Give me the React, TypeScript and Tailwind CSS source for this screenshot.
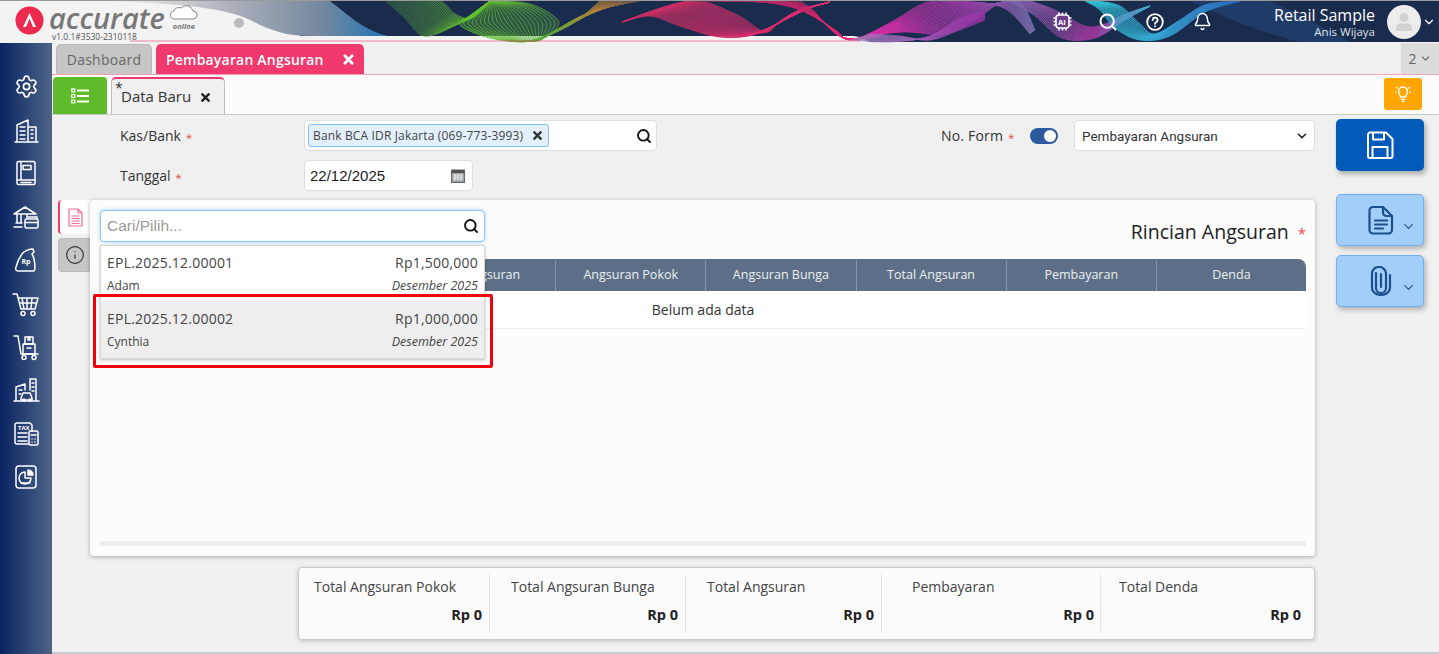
import React from "react";
import { Settings, Search, Bell, ChevronDown, Info } from "lucide-react";
import { FaTimes, FaUser } from "react-icons/fa";

type P = [number, number];
const smooth = (pts: P[], move = true) => {
  let d = `${move ? "M" : "L"}${pts[0][0]},${pts[0][1]}`;
  for (let i = 0; i < pts.length - 1; i++) {
    const p0 = pts[Math.max(i - 1, 0)], p1 = pts[i], p2 = pts[i + 1], p3 = pts[Math.min(i + 2, pts.length - 1)];
    d += ` C${(p1[0] + (p2[0] - p0[0]) / 6).toFixed(1)},${(p1[1] + (p2[1] - p0[1]) / 6).toFixed(1)} ${(p2[0] - (p3[0] - p1[0]) / 6).toFixed(1)},${(p2[1] - (p3[1] - p1[1]) / 6).toFixed(1)} ${p2[0]},${p2[1]}`;
  }
  return d;
};

const ribbons: { id: string; a: P[]; b: P[]; n: number; o: number }[] = [
  { id: "g1", a: [[385, 0], [405, 18], [424, 36], [455, 25], [490, 1]], b: [[440, 0], [447, 6], [455, 14], [472, 18], [490, 1]], n: 22, o: 0.75 },
  { id: "g2", a: [[490, 1], [472, 15], [460, 25], [490, 38], [530, 41], [570, 25], [600, 1]], b: [[490, 1], [530, 4], [558, 20], [552, 33], [540, 40], [590, 12], [640, 1]], n: 24, o: 0.75 },
  { id: "p1", a: [[622, 22], [650, 16], [680, 26], [720, 37], [760, 33], [795, 12], [830, 2]], b: [[622, 22], [690, 1], [735, 14], [765, 32], [780, 22], [810, 8], [830, 2]], n: 26, o: 0.8 },
  { id: "p2", a: [[690, 1], [760, 2], [800, 10], [835, 30], [850, 40], [880, 30], [900, 22]], b: [[800, 1], [805, 4], [815, 12], [825, 24], [845, 38], [880, 36], [900, 22]], n: 18, o: 0.7 },
  { id: "m1", a: [[865, 36], [895, 20], [925, 3], [955, 1], [990, 4], [1010, 12], [1030, 34]], b: [[865, 36], [905, 32], [945, 34], [975, 20], [1000, 3], [1020, 1], [1035, 30]], n: 26, o: 0.8 },
  { id: "m2", a: [[870, 34], [900, 36], [930, 40], [960, 30], [985, 20]], b: [[850, 40], [890, 42], [930, 36], [960, 18], [985, 12]], n: 14, o: 0.6 },
  { id: "t2", a: [[1010, 1], [1035, 16], [1062, 38], [1095, 38], [1125, 20], [1150, 6]], b: [[1030, 1], [1055, 10], [1085, 26], [1105, 24], [1125, 14], [1150, 6]], n: 16, o: 0.75 },
  { id: "t1", a: [[1085, 1], [1100, 10], [1115, 28], [1140, 40], [1170, 36], [1205, 12], [1240, 1]], b: [[1095, 1], [1120, 6], [1140, 24], [1155, 34], [1180, 20], [1205, 5], [1240, 1]], n: 18, o: 0.8 },
];

function Banner() {
  return (
    <svg className="absolute inset-0 h-[43px] w-[1439px]" viewBox="0 0 1439 43" preserveAspectRatio="none">
      <defs>
        <linearGradient id="gb" gradientUnits="userSpaceOnUse" x1="110" x2="390" y1="0" y2="0"><stop offset="0" stopColor="#f3f3f3" /><stop offset="0.45" stopColor="#a9aeb8" /><stop offset="0.75" stopColor="#76889f" /><stop offset="1" stopColor="#1d74b4" /></linearGradient>
        <linearGradient id="g1" gradientUnits="userSpaceOnUse" x1="385" x2="490" y1="0" y2="0"><stop offset="0" stopColor="#38693f" /><stop offset="1" stopColor="#66c92a" /></linearGradient>
        <linearGradient id="g2" gradientUnits="userSpaceOnUse" x1="460" x2="640" y1="0" y2="0"><stop offset="0" stopColor="#66c92a" /><stop offset="0.5" stopColor="#56a63a" /><stop offset="0.75" stopColor="#b98438" /><stop offset="1" stopColor="#5a4a50" /></linearGradient>
        <linearGradient id="p1" gradientUnits="userSpaceOnUse" x1="622" x2="830" y1="0" y2="0"><stop offset="0" stopColor="#c42f60" /><stop offset="1" stopColor="#e2296f" /></linearGradient>
        <linearGradient id="p2" gradientUnits="userSpaceOnUse" x1="690" x2="900" y1="0" y2="0"><stop offset="0" stopColor="#7a2a55" /><stop offset="0.7" stopColor="#e1246f" /><stop offset="1" stopColor="#e0289a" /></linearGradient>
        <linearGradient id="m1" gradientUnits="userSpaceOnUse" x1="865" x2="1035" y1="0" y2="0"><stop offset="0" stopColor="#d42aa0" /><stop offset="0.6" stopColor="#9b3aa8" /><stop offset="1" stopColor="#6d6aa5" /></linearGradient>
        <linearGradient id="m2" gradientUnits="userSpaceOnUse" x1="850" x2="985" y1="0" y2="0"><stop offset="0" stopColor="#9888c0" /><stop offset="1" stopColor="#a52eac" /></linearGradient>
        <linearGradient id="t1" gradientUnits="userSpaceOnUse" x1="1085" x2="1240" y1="0" y2="0"><stop offset="0" stopColor="#2ec4d0" /><stop offset="0.5" stopColor="#35a8d8" /><stop offset="1" stopColor="#2a62b0" /></linearGradient>
        <linearGradient id="t2" gradientUnits="userSpaceOnUse" x1="1010" x2="1150" y1="0" y2="0"><stop offset="0" stopColor="#7a6ab0" /><stop offset="0.6" stopColor="#b335a5" /><stop offset="1" stopColor="#36b8cc" /></linearGradient>
      </defs>
      <rect x="0" y="0" width="1439" height="43" fill="#f3f3f3" />
      <path d="M300,1 L1439,1 L1439,42 L870,42 C862,38 860,36 850,36 L300,36 Z" fill="#1a2c4e" />
      <path d="M1190,1 C1230,20 1260,32 1300,42 L1350,42 C1320,25 1290,10 1270,1 Z" fill="#2a5a9a" opacity="0.35" />
      <path d="M100,1 C180,3 225,8 250,20 C270,30 285,36 310,36 L388,36 C362,30 345,12 330,1 Z" fill="url(#gb)" />
      {ribbons.map((r) => (
        <path key={r.id} d={smooth(r.a) + " " + smooth([...r.b].reverse(), false) + " Z"} fill={`url(#${r.id})`} opacity="0.3" />
      ))}
      {ribbons.map((r) =>
        Array.from({ length: r.n }, (_, i) => {
          const t = i / (r.n - 1);
          const pts = r.a.map((p, k) => [p[0] + (r.b[k][0] - p[0]) * t, +(p[1] + (r.b[k][1] - p[1]) * t).toFixed(1)] as P);
          return <path key={r.id + i} d={smooth(pts)} fill="none" stroke={`url(#${r.id})`} strokeWidth="1" opacity={r.o} />;
        })
      )}
      <rect x="0" y="0" width="1439" height="1" fill="#9a9a9a" />
      <rect x="130" y="40.5" width="730" height="1" fill="#f0386b" opacity="0.6" />
    </svg>
  );
}

function SI({ children }: { children: React.ReactNode }) {
  return (
    <div className="flex h-[43.4px] items-center justify-center">
      <svg width="28" height="28" viewBox="0 0 28 28" fill="none" stroke="#fff" strokeWidth="1.5" strokeLinejoin="round" strokeLinecap="round">
        {children}
      </svg>
    </div>
  );
}

function Sidebar() {
  return (
    <div className="flex w-[52px] shrink-0 flex-col bg-gradient-to-r from-[#092361] to-[#4f6488] pt-[22px]">
      <div className="flex h-[43.4px] items-center justify-center"><Settings size={25} color="#fff" strokeWidth={1.6} /></div>
      <SI><path d="M3 26h23M5 26V9l11-5v22M16 11h8v15M8 11h5M8 15h5M8 19h5M8 23h5M19 14h2M19 18h2M19 22h2" /></SI>
      <SI><rect x="5" y="2.5" width="18" height="23" rx="1.5" /><path d="M9 3v18M5 21h18M11 6.5h8v4h-8zM9 23.500h10" /></SI>
      <SI><path d="M2 11l11-7 11 7zM5 11v9M9 11v9M15 11v4M2 24h8M4 20h6" /><rect x="13" y="16" width="13" height="9" rx="1.5" /><path d="M13 19.500h13M16 14h9v2" /></SI>
      <SI><path d="M10 8c2-3 7-5 11-5l1 3-2 2c2 3 3 9 3 15l-1 2H6c-2 0-3-2-2-4 1-4 3-9 6-13z" /><text x="9.500" y="18" fontSize="7" fontWeight="700" fill="#fff" stroke="none" fontFamily="'Open Sans'">Rp</text></SI>
      <SI><path d="M1 4h4l4 15h14l3-11H6M10 8l2 11M15 8v11M20 8l-1 11M7.500 13h17" /><circle cx="11" cy="23.500" r="2" /><circle cx="21" cy="23.500" r="2" /></SI>
      <SI><path d="M2 3h4l3 18M9 21h17" /><rect x="11" y="11" width="12" height="10" /><rect x="13" y="4" width="8" height="7" /><path d="M16 4v3h2V4M15 15h4" /><circle cx="12" cy="24.500" r="2" /><circle cx="22" cy="24.500" r="2" /></SI>
      <SI><path d="M2 25h25M4 24V11l9-3v6M18 14V3h6v21M7 14h3M7 18h2M20 7h2M20 11h2M20 15h2" /><path d="M9 22l2-5h7l2 5v2H9z" /><circle cx="12" cy="24" r="1" /><circle cx="18" cy="24" r="1" /></SI>
      <SI><path d="M17 24H5c-1 0-2-1-2-2V5c0-1 1-2 2-2h13l2 2v6M6 13h9M6 17h9M6 21h9" /><rect x="17" y="11" width="9" height="14" rx="1.500" /><path d="M19 15h5M20 19h0M23 19h0M20 22h0M23 22h0" /><text x="6" y="10" fontSize="6" fontWeight="700" fill="#fff" stroke="none" fontFamily="'Open Sans'">TAX</text></SI>
      <SI><rect x="4" y="3" width="20" height="22" rx="3" /><path d="M13 9a6 6 0 1 0 6 6h-6z" /><path d="M16 7a5 5 0 0 1 5 5h-5z" fill="#fff" /><path d="M9 20h9" /></SI>
    </div>
  );
}

function Header() {
  return (
    <div className="relative h-[43px] w-full shrink-0 overflow-hidden">
      <Banner />
      <div className="relative flex h-full items-center justify-between">
        <div className="relative flex h-full items-start pl-[15px]">
          <svg className="mt-[6px]" width="29" height="29" viewBox="0 0 29 29">
            <circle cx="14.500" cy="14.500" r="14" fill="#ec2a50" />
            <path d="M14.500 7 L21 21 H18 L14.500 12.500 L11 21 H8 Z" fill="#fff" />
          </svg>
          <div className="ml-[5px] flex flex-col">
            <div className="flex items-start">
              <span className="mt-[-2px] text-[29px] font-semibold italic leading-[40px] text-[#777]">accurate</span>
              <div className="ml-[5px] flex flex-col items-center">
                <svg className="mt-[4px]" width="28" height="16" viewBox="0 0 28 16" fill="#fff" stroke="#8a8a8a" strokeWidth="1">
                  <path d="M5 15a4 4 0 0 1-1-8 5 5 0 0 1 7-3 7 7 0 0 1 12 3 4 4 0 0 1 0 8z" />
                </svg>
                <span className="mt-[1px] text-[7.500px] font-bold italic leading-[10px] text-[#777]">online</span>
              </div>
            </div>
            <span className="absolute left-[52px] top-[31px] text-[8.500px] leading-[11px] text-[#555]">v1.0.1#3530-2310118</span>
          </div>
          <div className="absolute left-[234px] top-[18px] h-[10px] w-[10px] rounded-full bg-[#bbb]" />
        </div>
        <div className="flex items-center">
          <svg className="mr-[26px]" width="19" height="19" viewBox="0 0 19 19" fill="none" stroke="#fff" strokeWidth="1.600">
            <rect x="3" y="3" width="13" height="13" rx="3" />
            <path d="M6 .5v2.500M9.500 .5v2.500M13 .5v2.500M6 16v2.500M9.500 16v2.500M13 16v2.500M.5 6H3M.5 9.500H3M.5 13H3M16 6h2.500M16 9.500h2.500M16 13h2.500" />
            <text x="5" y="12.500" fontSize="7.500" fontWeight="700" fill="#fff" stroke="none" fontFamily="'Open Sans'">AI</text>
          </svg>
          <Search className="mr-[28px]" size={20} color="#fff" strokeWidth={2.400} />
          <svg className="mr-[29px]" width="18" height="18" viewBox="0 0 18 18" fill="none" stroke="#fff" strokeWidth="1.800" strokeLinecap="round">
            <circle cx="9" cy="9" r="7.800" />
            <path d="M6.700 7a2.400 2.400 0 1 1 3.400 2.200c-.8.4-1.100.8-1.100 1.600M9 13.200v.1" />
          </svg>
          <Bell className="mr-[62px]" size={19} color="#fff" strokeWidth={1.900} />
          <div className="flex flex-col items-end">
            <span className="text-[16px] leading-[20px] text-white">Retail Sample</span>
            <span className="text-[11.500px] leading-[14px] text-[#dfe3ea]">Anis Wijaya</span>
          </div>
          <div className="ml-[12px] flex h-[34px] w-[34px] items-center justify-center overflow-hidden rounded-full bg-[#ececec]">
            <FaUser size={18} color="#d2d2d2" />
          </div>
          <ChevronDown className="ml-[1px] mr-[3px]" size={14} color="#fff" strokeWidth={2} />
        </div>
      </div>
    </div>
  );
}

function Tabs() {
  return (
    <div className="flex h-[32px] shrink-0 items-end justify-between border-b border-[#f2a0b8] bg-[#f0f0f0]">
      <div className="flex items-end">
        <div className="ml-[4px] flex h-[30px] w-[96px] items-center justify-center rounded-t-[5px] border border-b-0 border-[#bbb] bg-[#c6c6c6] text-[14px] tracking-[0.25px] text-[#666]">Dashboard</div>
        <div className="ml-[4px] flex h-[30px] w-[208px] items-center justify-between rounded-t-[5px] bg-[#f0396c] pl-[10px] pr-[8px] text-[14px] font-semibold tracking-[0.2px] text-white">
          <span>Pembayaran Angsuran</span>
          <FaTimes size={15} color="#fff" />
        </div>
      </div>
      <div className="flex h-[31px] w-[38px] items-center justify-center gap-[2px] bg-[#dcdcdc] text-[14px] text-[#666]">
        2 <ChevronDown size={13} color="#666" />
      </div>
    </div>
  );
}

function SubTabs() {
  return (
    <div className="flex h-[40px] shrink-0 items-end justify-between border-b border-[#c8c8c8] bg-[#fcfcfc]">
      <div className="flex items-end">
        <div className="ml-[1px] flex h-[37px] w-[54px] items-center justify-center rounded-t-[4px] bg-[#5fbb2a]">
          <svg width="18" height="16" viewBox="0 0 18 16" fill="none" stroke="#fff" strokeWidth="2">
            <path d="M6 2.500h12M6 8h12M6 13.500h12" />
            <path strokeWidth="1.200" d="M.8 .8h3v3h-3zM.8 6.500h3v3h-3zM.8 12h3v3h-3z" />
          </svg>
        </div>
        <div className="relative ml-[4px] flex h-[37px] w-[114px] items-center rounded-t-[5px] border border-b-0 border-[#bbb] border-t-2 border-t-[#f0396c] bg-[#f0f0f0] pl-[9px] text-[15px] text-[#333]">
          <span className="absolute left-[3px] top-[1px] text-[14px] leading-[16px]">*</span>
          <span>Data Baru</span>
          <FaTimes className="ml-[8px] mt-[2px]" size={13} color="#222" />
        </div>
      </div>
      <div className="mb-[4px] mr-[17px] flex h-[32px] w-[38px] items-center justify-center rounded-[3px] bg-[#ffa600]">
        <svg width="16" height="18" viewBox="0 0 16 18" fill="none" stroke="#fff" strokeWidth="1.400" strokeLinecap="round">
          <path d="M5.500 12c0-2-2-3-2-5.500a4.500 4.500 0 0 1 9 0c0 2.500-2 3.500-2 5.500z" />
          <path d="M6.500 14.500h3M7.500 16.500h1M1.500 2.500l.5.500M14.500 2.500l-.5.500M.5 7h.5M15 7h.5" />
        </svg>
      </div>
    </div>
  );
}

function Req() {
  return <span className="ml-[5px] align-[-1px] text-[11px] text-[#ef4444]">*</span>;
}

function FormRows() {
  return (
    <div className="flex shrink-0 flex-col gap-[9px] pl-[68px] pt-[5px]">
      <div className="flex h-[31px] items-center justify-between">
        <div className="flex items-center">
          <div className="w-[184px] text-[14px] text-[#333]">Kas/Bank<Req /></div>
          <div className="flex h-[31px] w-[353px] items-center justify-between rounded-[4px] border border-[#ddd] bg-white pl-[3px] pr-[4px]">
            <div className="flex h-[23px] w-[241px] items-center justify-between rounded-[3px] border border-[#7fbdf5] bg-[#e3effb] pl-[4px] pr-[4px] text-[12px] tracking-[0.15px] text-[#444]">
              <span>Bank BCA IDR Jakarta (069-773-3993)</span>
              <FaTimes size={13} color="#333" />
            </div>
            <Search size={16} color="#111" strokeWidth={2.800} />
          </div>
        </div>
        <div className="flex items-center">
          <span className="w-[89px] text-[14px] tracking-[0.2px] text-[#333]">No. Form<Req /></span>
          <div className="flex h-[16px] w-[28px] items-center justify-end rounded-full bg-[#2b5a9e] pr-[2px]">
            <div className="h-[12px] w-[12px] rounded-full bg-white" />
          </div>
          <div className="ml-[16px] flex h-[31px] w-[241px] items-center justify-between rounded-[4px] border border-[#ddd] bg-white pl-[7px] pr-[5px] font-['Roboto',sans-serif] text-[13.500px] text-[#333]">
            <span className="pt-[1px]">Pembayaran Angsuran</span>
            <ChevronDown size={14} color="#222" strokeWidth={2.800} />
          </div>
        </div>
      </div>
      <div className="flex h-[31px] items-center">
        <div className="w-[184px] text-[14px] text-[#333]">Tanggal<Req /></div>
        <div className="flex h-[31px] w-[169px] items-center justify-between rounded-[4px] border border-[#ddd] bg-white pl-[5px] pr-[7px] font-['Liberation_Sans',sans-serif] text-[15px] text-[#222]">
          <span className="pt-[1px]">22/12/2025</span>
          <svg width="14" height="14" viewBox="0 0 14 14">
            <rect x=".5" y="1" width="13" height="12.500" fill="#9aa0a8" stroke="#666" strokeWidth="1" />
            <rect x="1" y="1" width="12" height="3" fill="#555" />
            <path d="M2 6h10M2 8h10M2 10h10M4 5v7M7 5v7M10 5v7" stroke="#fff" strokeWidth=".7" />
          </svg>
        </div>
      </div>
    </div>
  );
}

function Dropdown() {
  return (
    <div className="absolute left-[10px] top-[10px] z-10 w-[385px]">
      <div className="flex h-[32px] items-center justify-between rounded-[4px] border border-[#8ec6f6] bg-white pl-[6px] pr-[5px] font-['Liberation_Sans',sans-serif] text-[15.500px] text-[#9a9a9a] shadow-[0_0_4px_#a8d4fa]">
        <span>Cari/Pilih...</span>
        <Search size={16} color="#111" strokeWidth={2.800} />
      </div>
      <div className="mt-[3px] border border-[#d8d8d8] bg-white text-[#444] shadow-[0_1px_3px_rgba(0,0,0,0.25)]">
        <div className="h-[55px] px-[6px] pt-[7px]">
          <div className="flex justify-between text-[14px] leading-[19px] tracking-[0.22px]"><span>EPL.2025.12.00001</span><span>Rp1,500,000</span></div>
          <div className="mt-[5px] flex justify-between text-[12px] leading-[17px]"><span>Adam</span><span className="text-[12.500px] italic">Desember 2025</span></div>
        </div>
        <div className="h-[57px] bg-[#eeeeee] px-[6px] pt-[8px]">
          <div className="flex justify-between text-[14px] leading-[19px] tracking-[0.22px]"><span>EPL.2025.12.00002</span><span>Rp1,000,000</span></div>
          <div className="mt-[5px] flex justify-between text-[12px] leading-[17px]"><span>Cynthia</span><span className="text-[12.500px] italic">Desember 2025</span></div>
        </div>
      </div>
    </div>
  );
}

function Panel() {
  const cols = ["Tgl. Angsuran", "Angsuran Pokok", "Angsuran Bunga", "Total Angsuran", "Pembayaran", "Denda"];
  return (
    <div className="flex h-[356px] shrink-0 pl-[6px]">
      <div className="flex w-[32px] shrink-0 flex-col gap-[4px]">
        <div className="flex h-[34px] items-center justify-center rounded-l-[4px] border-l-2 border-[#f0396c] bg-white">
          <svg width="17" height="19" viewBox="0 0 17 19" fill="none" stroke="#f46a90" strokeWidth="1.200">
            <path d="M2 1h9l4 4v13H2zM11 1v4h4" />
            <path d="M4.500 8h8M4.500 10.500h8M4.500 13h8M4.500 15.500h8" />
          </svg>
        </div>
        <div className="flex h-[34px] items-center justify-center rounded-l-[4px] border border-r-0 border-[#bbb] bg-[#c6c6c6]">
          <Info size={20} color="#333" strokeWidth={1.400} />
        </div>
      </div>
      <div className="relative flex flex-1 flex-col rounded-[4px] bg-[#fcfcfc] shadow-[0_1px_4px_rgba(0,0,0,0.3)]">
        <Dropdown />
        <div className="flex h-[59px] items-start justify-end pr-[9px] pt-[18px] text-[19.500px] leading-[27px] text-[#222]">
          Rincian Angsuran<span className="ml-[9px] mt-[2px] text-[15px] text-[#ef4444]">*</span>
        </div>
        <div className="ml-[10px] mr-[9px] grid h-[32px] grid-cols-[305px_repeat(6,1fr)] items-stretch rounded-tr-[8px] bg-[#5c6f86] pt-[1px] text-[12.500px] text-[#eef0f2]">
          <div />
          {cols.map((c) => (
            <div key={c} className="flex items-center justify-center border-l border-[#8595a7] first:border-l-0">{c}</div>
          ))}
        </div>
        <div className="ml-[10px] mr-[9px] flex h-[38px] items-center justify-center border-b border-[#eee] bg-white text-[14px] text-[#333]">Belum ada data</div>
        <div className="flex-1" />
        <div className="ml-[10px] mr-[9px] mb-[10px] h-[5px] bg-[#eeeeee]" />
        <div className="pointer-events-none absolute left-[3px] top-[94px] z-20 h-[74px] w-[400px] rounded-[2px] border-[3px] border-[#f4000c]" />
      </div>
    </div>
  );
}

function Totals() {
  const cells = [
    { t: "Total Angsuran Pokok", w: "w-[191px]", pl: "pl-[15px]", pr: "pr-[7px]" },
    { t: "Total Angsuran Bunga", w: "w-[196px]", pl: "pl-[21px]", pr: "pr-[7px]" },
    { t: "Total Angsuran", w: "w-[196px]", pl: "pl-[21px]", pr: "pr-[7px]" },
    { t: "Pembayaran", w: "w-[219px]", pl: "pl-[30px]", pr: "pr-[6px]" },
    { t: "Total Denda", w: "flex-1", pl: "pl-[18px]", pr: "pr-[13px]" },
  ];
  return (
    <div className="ml-[246px] mt-[11px] flex h-[73px] shrink-0 items-stretch rounded-[4px] border border-[#ccc] bg-[#fbfbfb] py-[6px] shadow-[0_1px_4px_rgba(0,0,0,0.2)]">
      {cells.map((c, i) => (
        <div key={c.t} className={`${c.w} ${c.pl} ${c.pr} flex flex-col pt-[3px] ${i < 4 ? "border-r border-[#e4e4e4]" : ""}`}>
          <span className="text-[14px] leading-[19px] text-[#444]">{c.t}</span>
          <span className="mt-[9px] text-right text-[14.500px] font-bold leading-[19px] text-[#222]">Rp 0</span>
        </div>
      ))}
    </div>
  );
}

function RightCol() {
  const chev = <ChevronDown className="absolute right-[7px] top-[24px]" size={15} color="#1d4f8c" strokeWidth={1.800} />;
  return (
    <div className="flex w-[88px] shrink-0 flex-col pt-[4px]">
      <div className="flex h-[52px] items-center justify-center rounded-[5px] bg-[#045ab8] pr-[1px] shadow-[2px_3px_5px_rgba(0,0,0,0.3)]">
        <svg width="30" height="30" viewBox="0 0 30 30" fill="none" stroke="#fff" strokeWidth="2" strokeLinejoin="round">
          <path d="M3 4.500a2 2 0 0 1 2-2h16l6.500 6.500v17a2 2 0 0 1-2 2H5a2 2 0 0 1-2-2z" />
          <path d="M8 2.500v7h11v-7M7.500 28V17h15v11" />
        </svg>
      </div>
      <div className="relative mt-[23px] flex h-[52px] items-center justify-center rounded-[5px] border border-[#6db0f2] bg-[#a4cefa] shadow-[2px_3px_5px_rgba(0,0,0,0.25)]">
        <svg className="mr-[-1px]" width="26" height="30" viewBox="0 0 26 30" fill="none" stroke="#1d4f8c" strokeWidth="2.200" strokeLinejoin="round" strokeLinecap="round">
          <path d="M5 2h10l9 9v14a3.500 3.500 0 0 1-3.500 3.500H5A3.500 3.500 0 0 1 1.500 25V5.500A3.500 3.500 0 0 1 5 2z" />
          <path d="M15 2v5.500a3.500 3.500 0 0 0 3.500 3.500H24M7 15.500h12M7 19.500h12M7 23.500h8" />
        </svg>
        {chev}
      </div>
      <div className="relative mt-[9px] flex h-[52px] items-center justify-center rounded-[5px] border border-[#6db0f2] bg-[#a4cefa] shadow-[2px_3px_5px_rgba(0,0,0,0.25)]">
        <svg className="mr-[-1px]" width="22" height="30" viewBox="0 0 22 30" fill="none" stroke="#1d4f8c" strokeWidth="2.200" strokeLinecap="round">
          <path d="M16 7v15a5 5 0 0 1-10 0V7" />
          <path d="M20 9v13a9 7 0 0 1-18 0V8a7 6.500 0 0 1 14-1" />
          <path d="M11 8v13" />
        </svg>
        {chev}
      </div>
    </div>
  );
}

export default function App() {
  return (
    <div className="flex h-[654px] w-[1439px] flex-col overflow-hidden bg-[#f0f0f0] font-['Open_Sans',sans-serif]">
      <Header />
      <div className="flex min-h-0 flex-1">
        <Sidebar />
        <div className="flex min-w-0 flex-1 flex-col">
          <Tabs />
          <SubTabs />
          <div className="flex min-h-0 flex-1 justify-between pr-[15px]">
            <div className="flex w-[1263px] flex-col">
              <FormRows />
              <div className="h-[9px] shrink-0" />
              <Panel />
              <Totals />
            </div>
            <RightCol />
          </div>
          <div className="h-[2px] shrink-0 bg-[#c5cad3]" />
        </div>
      </div>
    </div>
  );
}
